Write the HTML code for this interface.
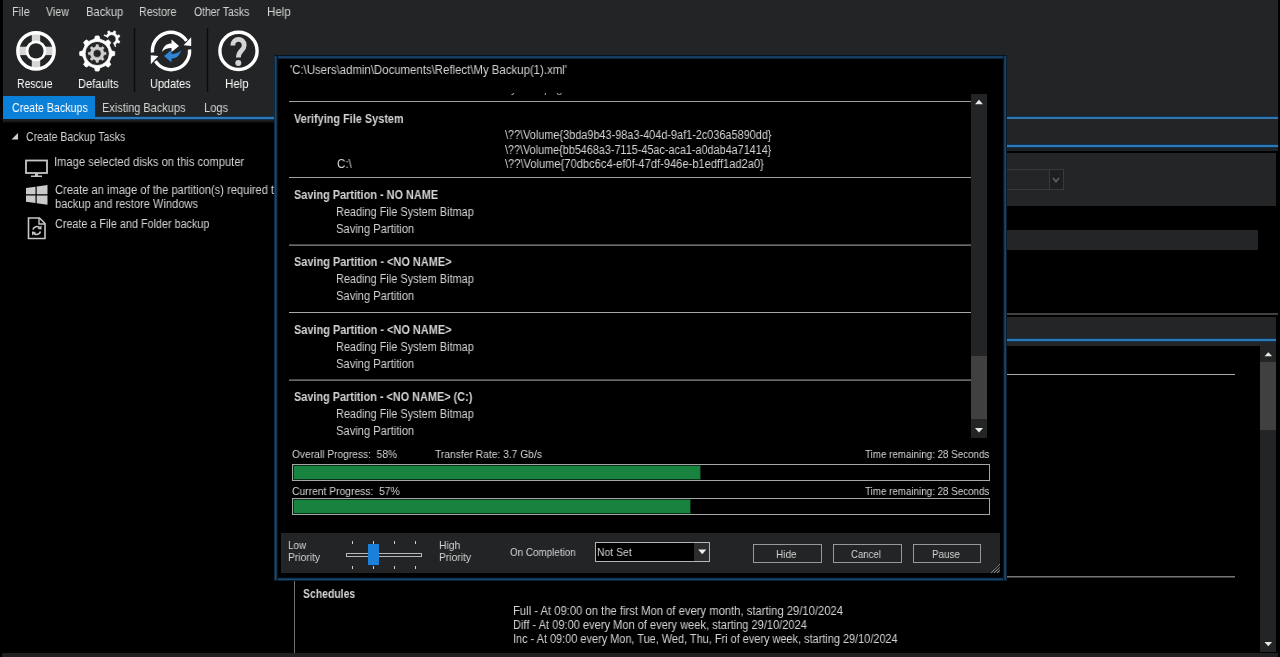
<!DOCTYPE html>
<html>
<head>
<meta charset="utf-8">
<title>Backup</title>
<style>
html,body{margin:0;padding:0;}
body{width:1280px;height:657px;overflow:hidden;background:#000;position:relative;
 font-family:"Liberation Sans",sans-serif;font-size:12px;color:#e4e4e4;}
.a{position:absolute;}
.t{position:absolute;white-space:nowrap;line-height:14px;height:14px;transform-origin:0 0;color:#d4d4d4;will-change:transform;}
.b{font-weight:bold;}
.g{background:#222425;}
.bl{background:linear-gradient(#0f3355 0 1px,#2f78b2 1px 3px,#0f3355 3px 4px);}
.ln{position:absolute;height:1px;background:#9e9e9e;}
.l2{position:absolute;height:2px;background:linear-gradient(#464646 0 1px,#6a6a6a 1px 2px);}
.btn{position:absolute;box-sizing:border-box;border:1px solid #989898;height:19px;top:544px;text-align:center;line-height:18px;color:#dcdcdc;}
</style>
</head>
<body>
<!-- top bar -->
<div class="a g" id="topbar" style="left:3px;top:0;width:1275px;height:117px;"></div>
<div class="a" style="left:3px;top:119px;width:1275px;height:4px;background:linear-gradient(#1c1e20 0 2px,#151617 2px 3px,#0a0a0b 3px 4px);"></div>

<!-- toolbar icons -->
<svg class="a" id="icons" style="left:0;top:24px;" width="280" height="72" viewBox="0 24 280 72">
<g fill="#d6d6d6"><rect x="31.8" y="32.4" width="8.4" height="37"/><rect x="17.5" y="46.699999999999996" width="37" height="8.4"/></g>
<circle cx="36" cy="50.9" r="7.7" fill="#222425"/>
<circle cx="36" cy="50.9" r="18.2" fill="none" stroke="#fff" stroke-width="3.4"/>
<circle cx="36" cy="50.9" r="9.1" fill="none" stroke="#fff" stroke-width="2.6"/>
<path d="M111.66 50.86 L114.71 51.71 L114.71 55.29 L111.66 56.14 L109.29 61.86 L110.85 64.61 L108.31 67.15 L105.56 65.59 L99.84 67.96 L98.99 71.01 L95.41 71.01 L94.56 67.96 L88.84 65.59 L86.09 67.15 L83.55 64.61 L85.11 61.86 L82.74 56.14 L79.69 55.29 L79.69 51.71 L82.74 50.86 L85.11 45.14 L83.55 42.39 L86.09 39.85 L88.84 41.41 L94.56 39.04 L95.41 35.99 L98.99 35.99 L99.84 39.04 L105.56 41.41 L108.31 39.85 L110.85 42.39 L109.29 45.14 Z M85.10 53.50 a12.10 12.10 0 1 0 24.20 0 a12.10 12.10 0 1 0 -24.20 0 Z" fill="#fff" fill-rule="evenodd" stroke="#fff" stroke-width="0.8" stroke-linejoin="round"/>
<path d="M103.87 52.17 L106.04 52.45 L106.04 54.55 L103.87 54.83 L102.85 57.28 L104.19 59.01 L102.71 60.49 L100.98 59.15 L98.53 60.17 L98.25 62.34 L96.15 62.34 L95.87 60.17 L93.42 59.15 L91.69 60.49 L90.21 59.01 L91.55 57.28 L90.53 54.83 L88.36 54.55 L88.36 52.45 L90.53 52.17 L91.55 49.72 L90.21 47.99 L91.69 46.51 L93.42 47.85 L95.87 46.83 L96.15 44.66 L98.25 44.66 L98.53 46.83 L100.98 47.85 L102.71 46.51 L104.19 47.99 L102.85 49.72 Z M93.20 53.50 a4.00 4.00 0 1 0 8.00 0 a4.00 4.00 0 1 0 -8.00 0 Z" fill="#d0d0d0" fill-rule="evenodd" stroke="#d0d0d0" stroke-width="0.6" stroke-linejoin="round"/>
<defs><clipPath id="gc"><path d="M80 24 H130 V80 H80 Z M78.20 53.50 a19.00 19.00 0 1 0 38.00 0 a19.00 19.00 0 1 0 -38.00 0 Z" clip-rule="evenodd"/></clipPath></defs>
<path d="M118.08 40.27 L119.88 41.31 L119.12 43.15 L117.10 42.61 L115.31 44.40 L115.85 46.42 L114.01 47.18 L112.97 45.38 L110.43 45.38 L109.39 47.18 L107.55 46.42 L108.09 44.40 L106.30 42.61 L104.28 43.15 L103.52 41.31 L105.32 40.27 L105.32 37.73 L103.52 36.69 L104.28 34.85 L106.30 35.39 L108.09 33.60 L107.55 31.58 L109.39 30.82 L110.43 32.62 L112.97 32.62 L114.01 30.82 L115.85 31.58 L115.31 33.60 L117.10 35.39 L119.12 34.85 L119.88 36.69 L118.08 37.73 Z M107.40 39.00 a4.30 4.30 0 1 0 8.60 0 a4.30 4.30 0 1 0 -8.60 0 Z" fill="#fff" fill-rule="evenodd" stroke="#fff" stroke-width="0.6" stroke-linejoin="round" clip-path="url(#gc)"/>
<line x1="134.5" y1="28" x2="134.5" y2="92" stroke="#0b0b0b" stroke-width="1.4"/>
<line x1="207.5" y1="28" x2="207.5" y2="92" stroke="#0b0b0b" stroke-width="1.4"/>
<g fill="none" stroke="#fff" stroke-width="3.4">
  <path d="M152.5 52.5 A18.5 18.5 0 0 1 186.5 40.8"/>
  <path d="M189.5 49.5 A18.5 18.5 0 0 1 155.5 61.2"/>
 </g>
 <path d="M191.2 37.2 L191.2 46 L183.6 45.3 Z" fill="#fff"/>
 <path d="M150.8 64.2 L150.8 55.2 L158.4 55.9 Z" fill="#fff"/>
 <path d="M162 52 C163 46 167 43.5 171.5 43.5 L171.5 39.5 L179 46 L171.5 52 L171.5 48 C167 48 164 49.5 162 52 Z" fill="#fff"/>
 <path d="M181 50 C180 56 176 58.5 171.5 58.5 L171.5 62.5 L164 56 L171.5 50 L171.5 54 C176 54 179 52.5 181 50 Z" fill="#2f86d6"/>
<circle cx="238.5" cy="50.9" r="18.6" fill="none" stroke="#fff" stroke-width="3.4"/>
 <path d="M232.8 45.6 C232.8 37.5 244.2 37.5 244.2 45.2 C244.2 50.5 238.4 50.5 238.4 57.6" fill="none" stroke="#d4d4d4" stroke-width="4.8"/>
 <circle cx="238.3" cy="63" r="3" fill="#d4d4d4"/>
</svg>

<!-- tabs -->
<div class="a" style="left:3px;top:96px;width:92px;height:23px;background:#0b80d8;"></div>
<div class="a bl" style="left:95px;top:116px;width:1183px;height:4px;"></div>

<!-- left panel -->
<svg class="a" style="left:10px;top:131px;" width="10" height="10"><path d="M1.500 8.500 L8 8.500 L8 2 Z" fill="#d0d0d0"/></svg>
<svg class="a" style="left:24px;top:157px;" width="26" height="24" viewBox="0 0 26 24">
 <rect x="2" y="3.500" width="21" height="12.500" fill="none" stroke="#c6c6c6" stroke-width="1.800"/>
 <rect x="11" y="16" width="3" height="3" fill="#c6c6c6"/>
 <rect x="7" y="18.500" width="11" height="1.500" fill="#c6c6c6"/>
</svg>
<svg class="a" style="left:25px;top:184px;" width="24" height="22" viewBox="0 0 24 22">
 <g fill="#cacaca">
 <path d="M1 4 L10.500 2.700 L10.500 10.300 L1 10.300 Z"/>
 <path d="M11.700 2.500 L22.500 1 L22.500 10.300 L11.700 10.300 Z"/>
 <path d="M1 11.500 L10.500 11.500 L10.500 19.100 L1 17.800 Z"/>
 <path d="M11.700 11.500 L22.500 11.500 L22.500 20.800 L11.700 19.300 Z"/>
 </g>
</svg>
<svg class="a" style="left:26px;top:215.500px;" width="22" height="25" viewBox="0 0 22 25">
 <path d="M2.500 2 L13.500 2 L19 7.500 L19 22.500 L2.500 22.500 Z" fill="none" stroke="#c6c6c6" stroke-width="1.600"/>
 <path d="M13 2 L13 8 L19 8" fill="none" stroke="#c6c6c6" stroke-width="1.400"/>
 <path d="M7 13.500 A4 4 0 0 1 13.500 11.500 M14.500 15.500 A4 4 0 0 1 8 17.500" fill="none" stroke="#c6c6c6" stroke-width="1.700"/>
 <path d="M15.500 9.500 L15.500 13.500 L11.500 13 Z M6 19.500 L6 15.500 L10 16 Z" fill="#c6c6c6"/>
</svg>

<!-- right panel behind modal -->
<div class="a g" style="left:1000px;top:119px;width:278px;height:26px;"></div>
<div class="a bl" style="left:1000px;top:144px;width:278px;height:4px;"></div>
<div class="a" style="left:1000px;top:148px;width:278px;height:3px;background:#1f2122;"></div>
<div class="a" style="left:1000px;top:153px;width:276px;height:53px;background:#232526;"></div>
<div class="a" style="left:1049px;top:169px;width:15px;height:21px;background:#1e1f20;"></div>
<div class="a" style="left:990px;top:169px;width:74px;height:21px;box-sizing:border-box;border:1px solid #3a3a3a;"></div>
<div class="a" style="left:1049px;top:169px;width:1px;height:21px;background:#3a3a3a;"></div>
<svg class="a" style="left:1051px;top:175px;" width="10" height="10"><path d="M2 3 L5 6.500 L8 3" fill="none" stroke="#5c5c5c" stroke-width="1.800"/></svg>
<div class="a" style="left:1000px;top:230px;width:258px;height:20px;background:#232526;"></div>
<div class="a" style="left:1000px;top:313px;width:278px;height:2px;background:#404040;"></div>
<div class="a" style="left:1000px;top:317px;width:276px;height:29px;background:#232526;"></div>
<div class="a bl" style="left:1000px;top:338px;width:276px;height:4px;"></div>
<div class="a" style="left:1000px;top:346px;width:260px;height:308px;background:#000;"></div>
<div class="a" style="left:1260px;top:346px;width:16px;height:306px;background:#222425;"></div>
<div class="a" style="left:1260px;top:362px;width:16px;height:68px;background:#404040;"></div>
<svg class="a" style="left:1263px;top:349px;" width="10" height="8"><path d="M1.500 7.200 L5.300 3.200 L9.100 7.200 Z" fill="#e8e8e8"/></svg>
<svg class="a" style="left:1263px;top:640px;" width="10" height="8"><path d="M1.500 2 L5.300 6.200 L9.100 2 Z" fill="#e8e8e8"/></svg>
<div class="ln" style="left:1000px;top:374px;width:235px;background:#acacac;"></div>
<div class="a" style="left:1000px;top:576px;width:235px;height:2px;background:linear-gradient(#767676 0 1px,#3c3c3c 1px 2px);"></div>

<!-- below modal -->
<div class="a" style="left:294px;top:580px;width:1px;height:73px;background:#727272;"></div>
<div class="a" style="left:2px;top:653px;width:1276px;height:4px;background:#1f2021;"></div>

<div class="t" style="left:11.58px;top:4.64px;transform:scaleX(0.9167);">File</div>
<div class="t" style="left:46.00px;top:4.64px;transform:scaleX(0.8846);">View</div>
<div class="t" style="left:85.77px;top:4.64px;transform:scaleX(0.9308);">Backup</div>
<div class="t" style="left:139.11px;top:4.64px;transform:scaleX(0.8927);">Restore</div>
<div class="t" style="left:193.50px;top:4.64px;transform:scaleX(0.8672);">Other Tasks</div>
<div class="t" style="left:266.64px;top:4.64px;transform:scaleX(0.9625);">Help</div>
<div class="t" style="left:16.93px;top:76.84px;transform:scaleX(0.8750);color:#ffffff;">Rescue</div>
<div class="t" style="left:78.28px;top:76.84px;transform:scaleX(0.9209);color:#ffffff;">Defaults</div>
<div class="t" style="left:149.89px;top:76.84px;transform:scaleX(0.9091);color:#ffffff;">Updates</div>
<div class="t" style="left:224.84px;top:76.84px;transform:scaleX(0.9583);color:#ffffff;">Help</div>
<div class="t" style="left:11.80px;top:100.84px;transform:scaleX(0.8871);color:#ffffff;">Create Backups</div>
<div class="t" style="left:101.59px;top:100.84px;transform:scaleX(0.9133);">Existing Backups</div>
<div class="t" style="left:203.87px;top:100.84px;transform:scaleX(0.9280);">Logs</div>
<div class="t" style="left:25.60px;top:129.84px;transform:scaleX(0.8761);">Create Backup Tasks</div>
<div class="t" style="left:53.57px;top:154.84px;transform:scaleX(0.9320);">Image selected disks on this computer</div>
<div class="t" style="left:54.50px;top:183.24px;transform:scaleX(0.9279);">Create an image of the partition(s) required to</div>
<div class="t" style="left:54.50px;top:196.84px;transform:scaleX(0.9239);">backup and restore Windows</div>
<div class="t" style="left:54.50px;top:216.64px;transform:scaleX(0.9006);">Create a File and Folder backup</div>
<div class="t b" style="left:302.80px;top:586.84px;transform:scaleX(0.8700);">Schedules</div>
<div class="t" style="left:512.56px;top:603.54px;transform:scaleX(0.9370);">Full - At 09:00 on the first Mon of every month, starting 29/10/2024</div>
<div class="t" style="left:512.58px;top:617.84px;transform:scaleX(0.9223);">Diff - At 09:00 every Mon of every week, starting 29/10/2024</div>
<div class="t" style="left:512.59px;top:632.14px;transform:scaleX(0.9104);">Inc - At 09:00 every Mon, Tue, Wed, Thu, Fri of every week, starting 29/10/2024</div>
<!-- modal -->
<div class="a" id="modal" style="left:274px;top:55px;width:733px;height:526px;background:#000;"></div>
<div class="a" style="left:274px;top:55px;width:733px;height:4px;background:linear-gradient(#05141f 0 1px,#15395a 1px 2px,#173f63 2px 3px,#0c2740 3px 4px);"></div>
<div class="a" style="left:274px;top:577px;width:733px;height:4px;background:linear-gradient(#030d16 0 1px,#0f3050 1px 2px,#184a72 2px 3px,#081d30 3px 4px);"></div>
<div class="a" style="left:274px;top:56px;width:4px;height:524px;background:linear-gradient(90deg,#0a2a45 0 1px,#1e4a6e 1px 2px,#14324a 2px 3px,#061420 3px 4px);"></div>
<div class="a" style="left:1003px;top:56px;width:4px;height:524px;background:linear-gradient(90deg,#061624 0 1px,#123a5c 1px 2px,#17486c 2px 3px,#081c2e 3px 4px);"></div>

<div class="a" id="log" style="left:289px;top:93px;width:682px;height:344px;overflow:hidden;">
<div class="t" style="left:221.500px;top:-12.500px;color:#a0a0a0;">y</div><div class="t" style="left:255px;top:-12.500px;color:#a0a0a0;">p</div><div class="t" style="left:266.500px;top:-12.500px;color:#a0a0a0;">g</div>
</div>
<div class="ln" style="left:289px;top:101px;width:682px;"></div>
<div class="ln" style="left:289px;top:177px;width:682px;"></div>
<div class="l2" style="left:289px;top:244px;width:682px;"></div>
<div class="ln" style="left:289px;top:312px;width:682px;background:#a8a8a8;"></div>
<div class="l2" style="left:289px;top:379px;width:682px;"></div>

<!-- log scrollbar -->
<div class="a" style="left:971px;top:94px;width:16px;height:344px;background:#222425;"></div>
<div class="a" style="left:971px;top:356px;width:16px;height:63px;background:#404040;"></div>
<svg class="a" style="left:974px;top:97px;" width="10" height="8"><path d="M1 7.200 L5 2.800 L9 7.200 Z" fill="#e8e8e8"/></svg>
<svg class="a" style="left:974px;top:426px;" width="10" height="8"><path d="M1 2 L5 6.500 L9 2 Z" fill="#e8e8e8"/></svg>

<!-- progress -->
<div class="a" style="left:292px;top:464px;width:698px;height:17px;box-sizing:border-box;border:1px solid #a4a8a4;"></div>
<div class="a" style="left:294px;top:466px;width:406px;height:13px;background:#18833f;box-shadow:0 0 0 1px #0a2e17;"></div>
<div class="a" style="left:292px;top:498px;width:698px;height:17px;box-sizing:border-box;border:1px solid #a4a8a4;"></div>
<div class="a" style="left:294px;top:500px;width:396px;height:13px;background:#18833f;box-shadow:0 0 0 1px #0a2e17;"></div>

<div class="t" style="left:290.30px;top:63.14px;transform:scaleX(0.9505);">&#x27;C:\Users\admin\Documents\Reflect\My Backup(1).xml&#x27;</div>
<div class="t b" style="left:294.40px;top:111.59px;transform:scaleX(0.9083);">Verifying File System</div>
<div class="t" style="left:505.00px;top:128.14px;transform:scaleX(0.9078);">\??\Volume{3bda9b43-98a3-404d-9af1-2c036a5890dd}</div>
<div class="t" style="left:505.00px;top:142.84px;transform:scaleX(0.9017);">\??\Volume{bb5468a3-7115-45ac-aca1-a0dab4a71414}</div>
<div class="t" style="left:336.50px;top:156.84px;transform:scaleX(0.9625);">C:\</div>
<div class="t" style="left:505.00px;top:156.84px;transform:scaleX(0.9264);">\??\Volume{70dbc6c4-ef0f-47df-946e-b1edff1ad2a0}</div>
<div class="t b" style="left:294.40px;top:187.54px;transform:scaleX(0.9079);">Saving Partition - NO NAME</div>
<div class="t" style="left:335.59px;top:204.74px;transform:scaleX(0.9100);">Reading File System Bitmap</div>
<div class="t" style="left:335.60px;top:221.59px;transform:scaleX(0.9304);">Saving Partition</div>
<div class="t b" style="left:294.40px;top:255.34px;transform:scaleX(0.9121);">Saving Partition - &lt;NO NAME&gt;</div>
<div class="t" style="left:335.59px;top:272.24px;transform:scaleX(0.9100);">Reading File System Bitmap</div>
<div class="t" style="left:335.60px;top:289.09px;transform:scaleX(0.9304);">Saving Partition</div>
<div class="t b" style="left:294.40px;top:322.84px;transform:scaleX(0.9121);">Saving Partition - &lt;NO NAME&gt;</div>
<div class="t" style="left:335.59px;top:339.74px;transform:scaleX(0.9100);">Reading File System Bitmap</div>
<div class="t" style="left:335.60px;top:356.59px;transform:scaleX(0.9304);">Saving Partition</div>
<div class="t b" style="left:294.40px;top:389.74px;transform:scaleX(0.9066);">Saving Partition - &lt;NO NAME&gt; (C:)</div>
<div class="t" style="left:335.59px;top:406.84px;transform:scaleX(0.9100);">Reading File System Bitmap</div>
<div class="t" style="left:335.60px;top:423.84px;transform:scaleX(0.9304);">Saving Partition</div>
<div class="t" style="left:291.80px;top:446.79px;transform:scaleX(0.9292);font-size:11px;">Overall Progress:  58%</div>
<div class="t" style="left:434.80px;top:446.79px;transform:scaleX(0.9339);font-size:11px;">Transfer Rate: 3.7 Gb/s</div>
<div class="t" style="left:865.20px;top:446.79px;transform:scaleX(0.8907);font-size:11px;">Time remaining: 28 Seconds</div>
<div class="t" style="left:291.80px;top:483.69px;transform:scaleX(0.9365);font-size:11px;">Current Progress:  57%</div>
<div class="t" style="left:865.20px;top:483.69px;transform:scaleX(0.8907);font-size:11px;">Time remaining: 28 Seconds</div>
<!-- footer -->
<div class="a" style="left:281px;top:533px;width:719px;height:40px;background:#222425;"></div>
<div class="a" style="left:346px;top:553px;width:76px;height:4px;box-sizing:border-box;border:1px solid #b8b8b8;"></div>
<div class="a" style="left:368px;top:544px;width:11px;height:21px;background:#1a80da;"></div>
<svg class="a" style="left:345px;top:540px;" width="80" height="30">
 <g stroke="#cfcfcf" stroke-width="1">
 <line x1="7.500" y1="1" x2="7.500" y2="4"/><line x1="28.500" y1="1" x2="28.500" y2="4"/><line x1="49.500" y1="1" x2="49.500" y2="4"/><line x1="70.500" y1="1" x2="70.500" y2="4"/>
 <line x1="7.500" y1="26" x2="7.500" y2="29"/><line x1="28.500" y1="26" x2="28.500" y2="29"/><line x1="49.500" y1="26" x2="49.500" y2="29"/><line x1="70.500" y1="26" x2="70.500" y2="29"/>
 </g>
</svg>
<div class="a" style="left:595px;top:542px;width:115px;height:20px;box-sizing:border-box;border:1px solid #b4b4b4;background:#000;"></div>
<div class="a" style="left:694px;top:543px;width:15px;height:18px;background:#2b2c2d;"></div>
<svg class="a" style="left:696px;top:547px;" width="12" height="10"><path d="M2.200 2.500 L10.300 2.500 L6.250 7.200 Z" fill="#f0f0f0"/></svg>
<div class="btn" style="left:753px;width:69px;font-size:11px;"></div>
<div class="btn" style="left:833px;width:69px;font-size:11px;"></div>
<div class="btn" style="left:913px;width:68px;font-size:11px;"></div>
<svg class="a" style="left:989px;top:562px;" width="11" height="11"><g stroke="#b4b4b4" stroke-width="1" stroke-dasharray="1 0.6"><line x1="2" y1="11" x2="10.800" y2="2.200"/><line x1="5" y1="11" x2="10.800" y2="5.200"/><line x1="8" y1="11" x2="10.800" y2="8.200"/></g></svg>
<div class="t" style="left:288.10px;top:537.99px;transform:scaleX(0.9000);font-size:11px;">Low</div>
<div class="t" style="left:288.06px;top:550.09px;transform:scaleX(0.9353);font-size:11px;">Priority</div>
<div class="t" style="left:438.66px;top:537.99px;transform:scaleX(0.9381);font-size:11px;">High</div>
<div class="t" style="left:438.66px;top:550.09px;transform:scaleX(0.9353);font-size:11px;">Priority</div>
<div class="t" style="left:510.40px;top:544.89px;transform:scaleX(0.8945);font-size:11px;">On Completion</div>
<div class="t" style="left:597.06px;top:545.29px;transform:scaleX(0.9444);font-size:11px;">Not Set</div>
<div class="t" style="left:776.09px;top:546.99px;transform:scaleX(0.9091);font-size:11px;">Hide</div>
<div class="t" style="left:851.40px;top:546.99px;transform:scaleX(0.8706);font-size:11px;">Cancel</div>
<div class="t" style="left:931.70px;top:546.99px;transform:scaleX(0.8967);font-size:11px;">Pause</div>
</body>
</html>
